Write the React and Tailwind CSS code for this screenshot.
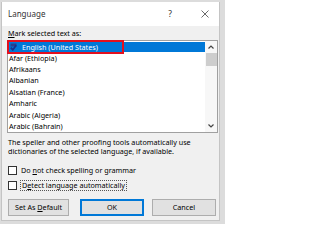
import React from "react";

const languages = [
  "Afar (Ethiopia)",
  "Afrikaans",
  "Albanian",
  "Alsatian (France)",
  "Amharic",
  "Arabic (Algeria)",
  "Arabic (Bahrain)",
];

const font = { fontFamily: '"Noto Sans", "Segoe UI", sans-serif' };

const CheckIcon = () => (
  <svg width="7" height="8" viewBox="0 0 7 8" className="shrink-0">
    <rect x="0.5" y="0.5" width="6" height="3" fill="#2a3f8f" />
    <path d="M0.8 4.6 L2.8 6.8 L6.2 2.2" fill="none" stroke="#1b2f8c" strokeWidth="1.8" />
  </svg>
);

const Box = ({ label }) => (
  <div className="h-[12px] flex items-center gap-[3px]">
    <div className="w-[9px] h-[9px] border border-[#333] bg-white shrink-0" />
    {label}
  </div>
);

export default function App() {
  return (
    <div
      className="w-[225px] h-[224px] bg-[#dcdcdc] pt-[2px] pl-[1px] pr-[5px] pb-[3px] text-black"
      style={font}
    >
      <div className="h-full flex flex-col bg-[#f0f0f0] border border-[#c4c4c4] border-t-0">
        {/* title bar */}
        <div className="h-[24px] bg-white flex items-center pl-[6px] text-[8px] text-[#333]">
          <span className="flex-1">Language</span>
          <span className="w-[12px] text-center text-[8.5px]">?</span>
          <svg width="8" height="8" viewBox="0 0 8 8" className="ml-[25px] mr-[10px]">
            <path d="M0.5 0.5 L7.5 7.5 M7.5 0.5 L0.5 7.5" stroke="#444" strokeWidth="0.8" />
          </svg>
        </div>

        <div className="flex flex-col pl-[5px] pr-[1px] text-[7.2px]">
          <div className="h-[10px] leading-[10px] mt-[2px] mb-[2px] pl-[1px]">
            <span className="underline">M</span>ark selected text as:
          </div>

          {/* list box */}
          <div className="h-[93px] bg-white border border-[#a0a0a0] flex">
            <div className="flex-1 flex flex-col">
              <div className="relative h-[10px] mt-[1px] bg-[#0078d7] text-white flex items-center gap-[5px] pl-[2px]">
                <CheckIcon />
                <span>English (United States)</span>
                <div className="absolute left-[-1px] top-[-2px] w-[117px] h-[14px] border-2 border-[#e3101e]" />
              </div>
              {languages.map((l) => (
                <div key={l} className="h-[11.4px] flex items-center pl-[1px] mt-[0.6px] first:mt-[1px]">
                  {l}
                </div>
              ))}
            </div>
            <div className="w-[12px] flex flex-col items-center bg-[#f7f7f7]">
              <svg width="8" height="8" viewBox="0 0 8 8" className="mt-[2px]">
                <path d="M1.5 5.5 L4 3 L6.5 5.5" fill="none" stroke="#444" strokeWidth="1.2" />
              </svg>
              <div className="w-[11px] h-[13px] bg-[#cdcdcd] mt-[2px]" />
              <div className="flex-1" />
              <svg width="8" height="8" viewBox="0 0 8 8" className="mb-[2px]">
                <path d="M1.5 2.5 L4 5 L6.5 2.5" fill="none" stroke="#444" strokeWidth="1.2" />
              </svg>
            </div>
          </div>

          <div className="leading-[9px] mt-[5px] pl-[1px] pr-[2px]">
            The speller and other proofing tools automatically use dictionaries of the selected
            language, if available.
          </div>

          <div className="flex flex-col gap-[3px] mt-[8px] pl-[1px]">
            <Box label={<span className="ml-[1px]">Do <span className="underline">n</span>ot check spelling or grammar</span>} />
            <Box
              label={
                <span className="h-[11px] flex items-center border border-dotted border-[#555] pl-[1px] pr-[1px]">
                  <span>D<span className="underline">e</span>tect language automatically</span>
                </span>
              }
            />
          </div>

          <div className="flex mt-[8px] pl-[1px]">
            <div className="w-[61px] h-[17px] bg-[#e1e1e1] border border-[#adadad] flex items-center justify-center">
              <span>Set As <span className="underline">D</span>efault</span>
            </div>
            <div className="w-[64px] h-[17px] ml-[11px] bg-[#e1e1e1] border border-[#0078d7] shadow-[inset_0_0_0_1px_#0078d7] flex items-center justify-center">
              OK
            </div>
            <div className="w-[64px] h-[17px] ml-[8px] bg-[#e1e1e1] border border-[#adadad] flex items-center justify-center">
              Cancel
            </div>
          </div>
        </div>
      </div>
    </div>
  );
}
